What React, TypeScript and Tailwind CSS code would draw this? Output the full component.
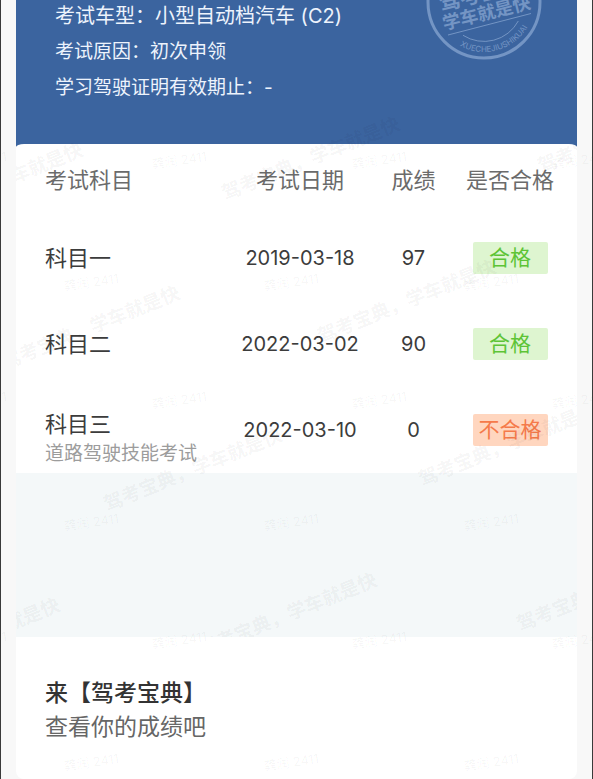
import React from 'react';

const exams = [
  { name: '科目一', note: '', date: '2019-03-18', score: 97, passed: true },
  { name: '科目二', note: '', date: '2022-03-02', score: 90, passed: true },
  { name: '科目三', note: '道路驾驶技能考试', date: '2022-03-10', score: 0, passed: false },
];

// centre points of the repeated marks
const sloganMarks = [
  [-6, 185], [311, 159], [627, 132],
  [91, 328], [407, 302],
  [193, 470], [508, 445],
  [-29, 640], [288, 615], [606, 590],
];

const userMarks = [160, 282, 400, 522, 640, 762].flatMap((y, row) =>
  [0, 1, 2, 3].map((col) => [(row % 2 === 0 ? -22 : 90) + col * 200, y])
);

function Seal() {
  return (
    <svg
      className="absolute top-0 right-[35px] h-[60px] w-[116px]"
      viewBox="426 0 116 60"
      fill="none"
      stroke="#7495c4"
      aria-hidden="true"
    >
      <circle cx="484" cy="2" r="56" strokeWidth="3" />
      <path d="M448 35L531 13.5" strokeWidth="1" />
      <path d="M463 35.3A39 39 0 0 0 518.3 21" strokeWidth="1" />
      <g fill="#7495c4" stroke="none" fontWeight="700" textAnchor="middle">
        <text x="482" y="1" fontSize="21" transform="rotate(-14 482 1)">驾考宝典</text>
        <text x="488" y="19" fontSize="18" transform="rotate(-14 488 19)">学车就是快</text>
      </g>
      <path id="seal-arc" d="M436 17A50.5 50.5 0 0 0 534 9" stroke="none" />
      <text fill="#7495c4" stroke="none" fontSize="8" fontWeight="400">
        <textPath href="#seal-arc" startOffset="57%" textAnchor="middle">XUECHEJIUSHIKUAI</textPath>
      </text>
    </svg>
  );
}

function SloganLayer() {
  return (
    <div className="pointer-events-none absolute inset-0 overflow-hidden" aria-hidden="true">
      {sloganMarks.map(([x, y]) => (
        <span
          key={`${x}-${y}`}
          className="absolute -translate-x-1/2 -translate-y-1/2 -rotate-[22deg] text-[19px] leading-6 font-bold whitespace-nowrap text-black/5"
          style={{ left: x - 16, top: y }}
        >
          驾考宝典，学车就是快
        </span>
      ))}
    </div>
  );
}

function UserLayer() {
  return (
    <div className="pointer-events-none absolute inset-0 overflow-hidden" aria-hidden="true">
      {userMarks.map(([x, y]) => (
        <span
          key={`${x}-${y}`}
          className="absolute -translate-x-1/2 -translate-y-1/2 -rotate-[8deg] text-[13px] leading-4 font-light whitespace-nowrap text-black/6"
          style={{ left: x, top: y }}
        >
          龚润 2411
        </span>
      ))}
    </div>
  );
}

export default function App() {
  return (
    <div
      lang="zh-CN"
      className="relative min-h-screen border-x border-[#3a3a3a] bg-[#f8f8f8] px-[15px] font-[Inter,'Noto_Sans_CJK_SC',sans-serif]"
    >
      <main className="relative overflow-hidden rounded-b-lg">
        {/* candidate info */}
        <header className="relative flex flex-col gap-[6px] bg-[#3b649f] pt-px pb-[41px] pl-[39px] text-[19px] leading-[30px] text-[#edf3fc]">
          <p className="text-[20px]">考试车型：小型自动档汽车 (C2)</p>
          <p>考试原因：初次申领</p>
          <p>学习驾驶证明有效期止：-</p>
          <Seal />
        </header>

        {/* results */}
        <section className="bg-[#3b649f]">
          <div className="rounded-[8px_8px_0_0/3px_3px_0_0] bg-white pt-px pr-[10px]">
            <table className="w-full table-fixed text-center text-[20px] leading-7 text-[#3c3c3c]">
              <thead>
                <tr className="h-[70px] text-[22px] text-[#6b6b6b]">
                  <th className="pl-[29px] text-left font-normal">考试科目</th>
                  <th className="w-[148px] font-normal">考试日期</th>
                  <th className="w-[79px] font-normal">成绩</th>
                  <th className="w-[114px] font-normal">是否合格</th>
                </tr>
              </thead>
              <tbody>
                {exams.map((exam) => (
                  <tr key={exam.name} className="h-[86px]">
                    <td className={exam.note ? 'pt-[23px] pl-[29px] text-left align-top' : 'pl-[29px] text-left'}>
                      <p className="text-[22px]">{exam.name}</p>
                      {exam.note && <p className="mt-1 text-[19px] leading-6 text-[#9c9c9c]">{exam.note}</p>}
                    </td>
                    <td>{exam.date}</td>
                    <td>{exam.score}</td>
                    <td>
                      <span
                        className={`mx-auto block w-[75px] rounded-xs text-[21px] leading-8 ${
                          exam.passed ? 'bg-[#def5d0] text-[#5dc436]' : 'bg-[#ffd6bf] text-[#f57a4a]'
                        }`}
                      >
                        {exam.passed ? '合格' : '不合格'}
                      </span>
                    </td>
                  </tr>
                ))}
              </tbody>
            </table>
          </div>
        </section>
        <div className="h-[164px] bg-[#f4f8f9]" />
        <SloganLayer />

        {/* app promo */}
        <footer className="relative bg-white pt-[39px] pb-[35px] pl-[29px] text-[23px] leading-[34px]">
          <p className="font-medium text-[#333333]">来【驾考宝典】</p>
          <p className="text-[#666666]">查看你的成绩吧</p>
        </footer>
      </main>
      <UserLayer />
    </div>
  );
}
